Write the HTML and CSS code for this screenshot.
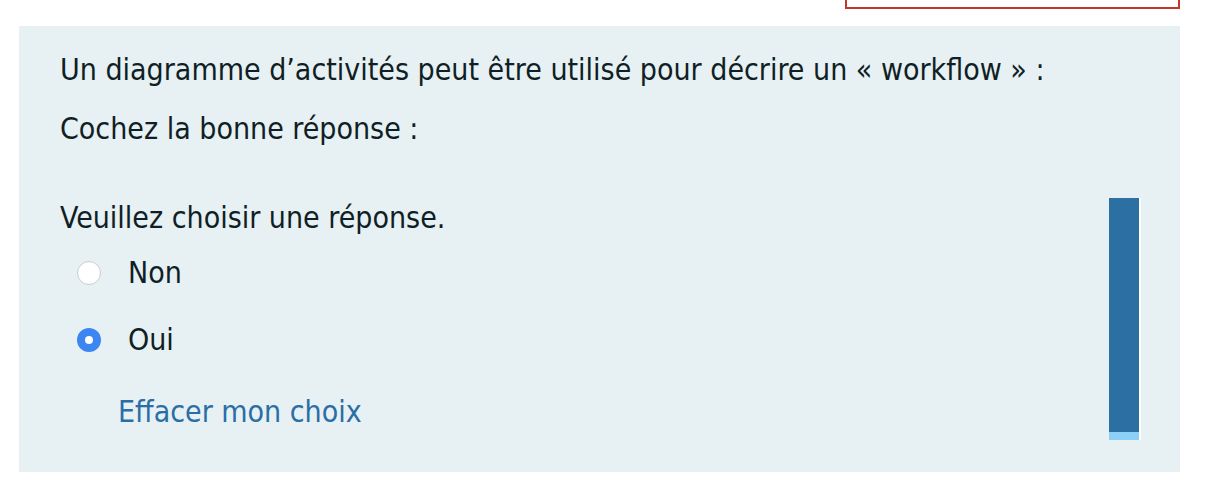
FILE: index.html
```html
<!DOCTYPE html>
<html lang="fr">
<head>
<meta charset="utf-8">
<link rel="stylesheet" href="styles.css">
</head>
<body>
<div class="topbox"></div>
<div class="question">
  <div class="content">
    <p class="qtext">Un diagramme d’activités peut être utilisé pour décrire un « workflow » :</p>
    <p class="qtext">Cochez la bonne réponse :</p>
    <p class="prompt">Veuillez choisir une réponse.</p>
    <div class="answer">
      <label class="option"><span class="radio"></span><span class="label">Non</span></label>
      <label class="option second"><span class="radio checked"></span><span class="label">Oui</span></label>
    </div>
    <a class="clear" href="#">Effacer mon choix</a>
  </div>
  <div class="aside"><div class="bar"><div class="bar-end"></div></div></div>
</div>
</body>
</html>
```
FILE: styles.css
```css
body{margin:0;background:#fff;font-family:"DejaVu Sans Condensed","DejaVu Sans",sans-serif;color:#0f1f25;}
.topbox{margin-left:845px;width:331px;height:7px;border:2px solid #c0392b;border-top:none;}
.question{margin:17px 0 0 19px;width:1161px;height:446px;background:#e7f0f3;display:flex;}
.content{flex:1;padding:14px 0 0 41px;font-size:30px;}
.qtext{margin:0;line-height:59px;white-space:nowrap;}
.prompt{margin:30px 0 0;line-height:59px;}
.answer{margin-top:4px;}
.option{display:flex;align-items:center;height:44px;line-height:44px;padding-left:17px;}
.option.second{margin-top:23px;}
.radio{width:22px;height:22px;border:1px solid #c9cccd;border-radius:50%;background:#fff;box-sizing:content-box;flex:none;position:relative;}
.radio.checked{width:24px;height:24px;border:none;background:#3b86f2;}
.radio.checked::after{content:"";position:absolute;left:8px;top:8px;width:8px;height:8px;border-radius:50%;background:#fff;}
.label{margin-left:27px;}
.clear{display:block;margin:28px 0 0 58px;line-height:44px;color:#2a6ea5;text-decoration:none;}
.aside{width:32px;margin:172px 39px 0 0;}
.bar{height:242px;width:30px;border-right:2px solid #fff;background:#2c6fa3;display:flex;flex-direction:column;justify-content:flex-end;}
.bar-end{height:8px;background:#8ccff7;}
```
